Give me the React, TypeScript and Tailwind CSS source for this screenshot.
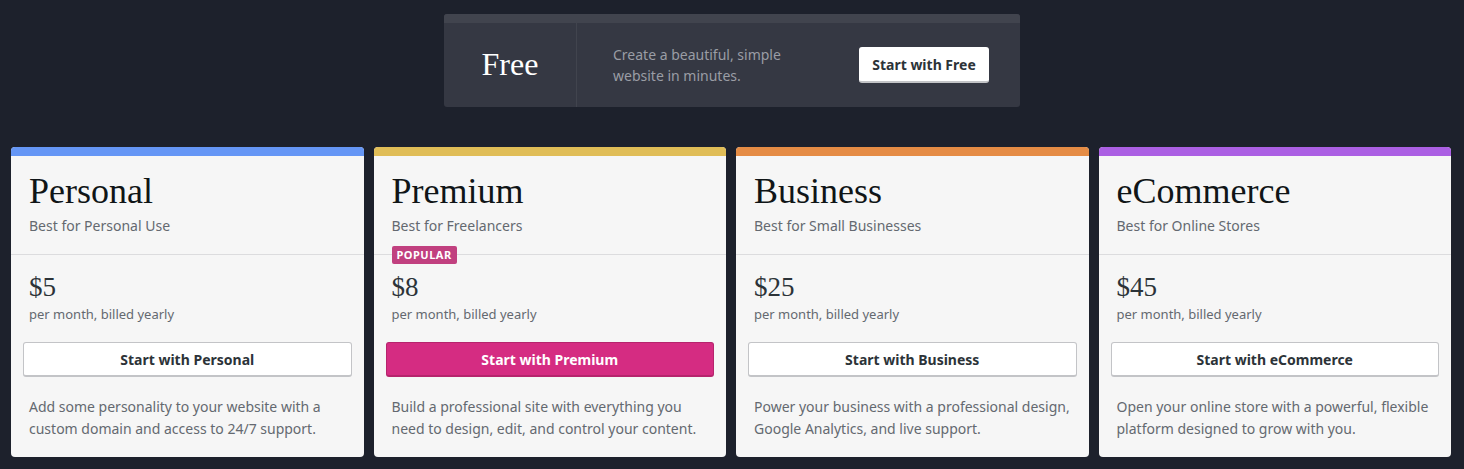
import React from "react";

const serif = { fontFamily: '"Liberation Serif", "Times New Roman", serif' };

type Plan = {
  name: string;
  tagline: string;
  price: string;
  desc: [string, string];
  bar: string;
  primary?: boolean;
  popular?: boolean;
};

const plans: Plan[] = [
  {
    name: "Personal",
    tagline: "Best for Personal Use",
    price: "$5",
    desc: ["Add some personality to your website with a", "custom domain and access to 24/7 support."],
    bar: "bg-[#6596f5]",
  },
  {
    name: "Premium",
    tagline: "Best for Freelancers",
    price: "$8",
    desc: ["Build a professional site with everything you", "need to design, edit, and control your content."],
    bar: "bg-[#e0bd57]",
    primary: true,
    popular: true,
  },
  {
    name: "Business",
    tagline: "Best for Small Businesses",
    price: "$25",
    desc: ["Power your business with a professional design,", "Google Analytics, and live support."],
    bar: "bg-[#e58c45]",
  },
  {
    name: "eCommerce",
    tagline: "Best for Online Stores",
    price: "$45",
    desc: ["Open your online store with a powerful, flexible", "platform designed to grow with you."],
    bar: "bg-[#ab5fe3]",
  },
];

function Card({ p }: { p: Plan }) {
  return (
    <div className="flex flex-col rounded-[4px] overflow-hidden bg-[#f6f6f6]">
      <div className={`h-[9px] ${p.bar}`} />
      <div className="px-[18px] pt-[15px] pb-[18px] border-b border-[#dcdcde]">
        <div className="text-[36px] leading-[40px] text-[#101517]" style={serif}>
          {p.name}
        </div>
        <div className="mt-[5px] text-[14px] leading-[20px] text-[#646970]">{p.tagline}</div>
      </div>
      <div className="relative">
        {p.popular && (
          <div className="absolute left-[18px] top-[-9px] h-[18px] px-[5px] rounded-[2px] bg-[#c1407f] text-white text-[11px] leading-[18px] font-bold tracking-[0.5px]">
            POPULAR
          </div>
        )}
        <div className="px-[18px] pt-[16px]">
          <div className="text-[27px] leading-[32px] text-[#2c3338]" style={serif}>
            {p.price}
          </div>
          <div className="mt-[2px] text-[13px] leading-[18px] text-[#646970]">per month, billed yearly</div>
        </div>
        <div className="px-[12px] mt-[19px]">
          {p.primary ? (
            <button className="w-full h-[35px] rounded-[3px] bg-[#d52c82] border border-[#b6246d] border-b-2 text-white text-[14px] font-bold">
              Start with {p.name}
            </button>
          ) : (
            <button className="w-full h-[35px] rounded-[3px] bg-white border border-[#c3c4c7] border-b-2 text-[#2c3338] text-[14px] font-bold">
              Start with {p.name}
            </button>
          )}
        </div>
        <div className="px-[18px] mt-[19px] pb-[17px] text-[14px] leading-[22px] text-[#646970]">
          <div>{p.desc[0]}</div>
          <div>{p.desc[1]}</div>
        </div>
      </div>
    </div>
  );
}

export default function App() {
  return (
    <div
      className="w-[1464px] h-[469px] bg-[#1d212c] overflow-hidden"
      style={{ fontFamily: '"Noto Sans", "Open Sans", sans-serif' }}
    >
      <div className="pt-[14px]">
        <div className="mx-auto w-[576px] rounded-[3px] overflow-hidden bg-[#353843]">
          <div className="h-[9px] bg-[#41444e]" />
          <div className="flex items-stretch h-[84px]">
            <div className="w-[133px] flex items-center justify-center border-r border-[#41444e]">
              <span className="text-[32px] leading-[36px] text-white -mt-[2px]" style={serif}>
                Free
              </span>
            </div>
            <div className="flex-1 flex items-center pl-[36px] pr-[31px]">
              <div className="flex-1 text-[14px] leading-[21px] text-[#9a9da5]">
                <div>Create a beautiful, simple</div>
                <div>website in minutes.</div>
              </div>
              <button className="h-[36px] w-[130px] rounded-[3px] bg-white border-b-2 border-[#c3c4c7] text-[#2c3338] text-[14px] font-bold">
                Start with Free
              </button>
            </div>
          </div>
        </div>
      </div>
      <div className="ml-[11px] mt-[40px] w-[1440px] grid grid-cols-4 gap-[10px]">
        {plans.map((p) => (
          <Card key={p.name} p={p} />
        ))}
      </div>
    </div>
  );
}
